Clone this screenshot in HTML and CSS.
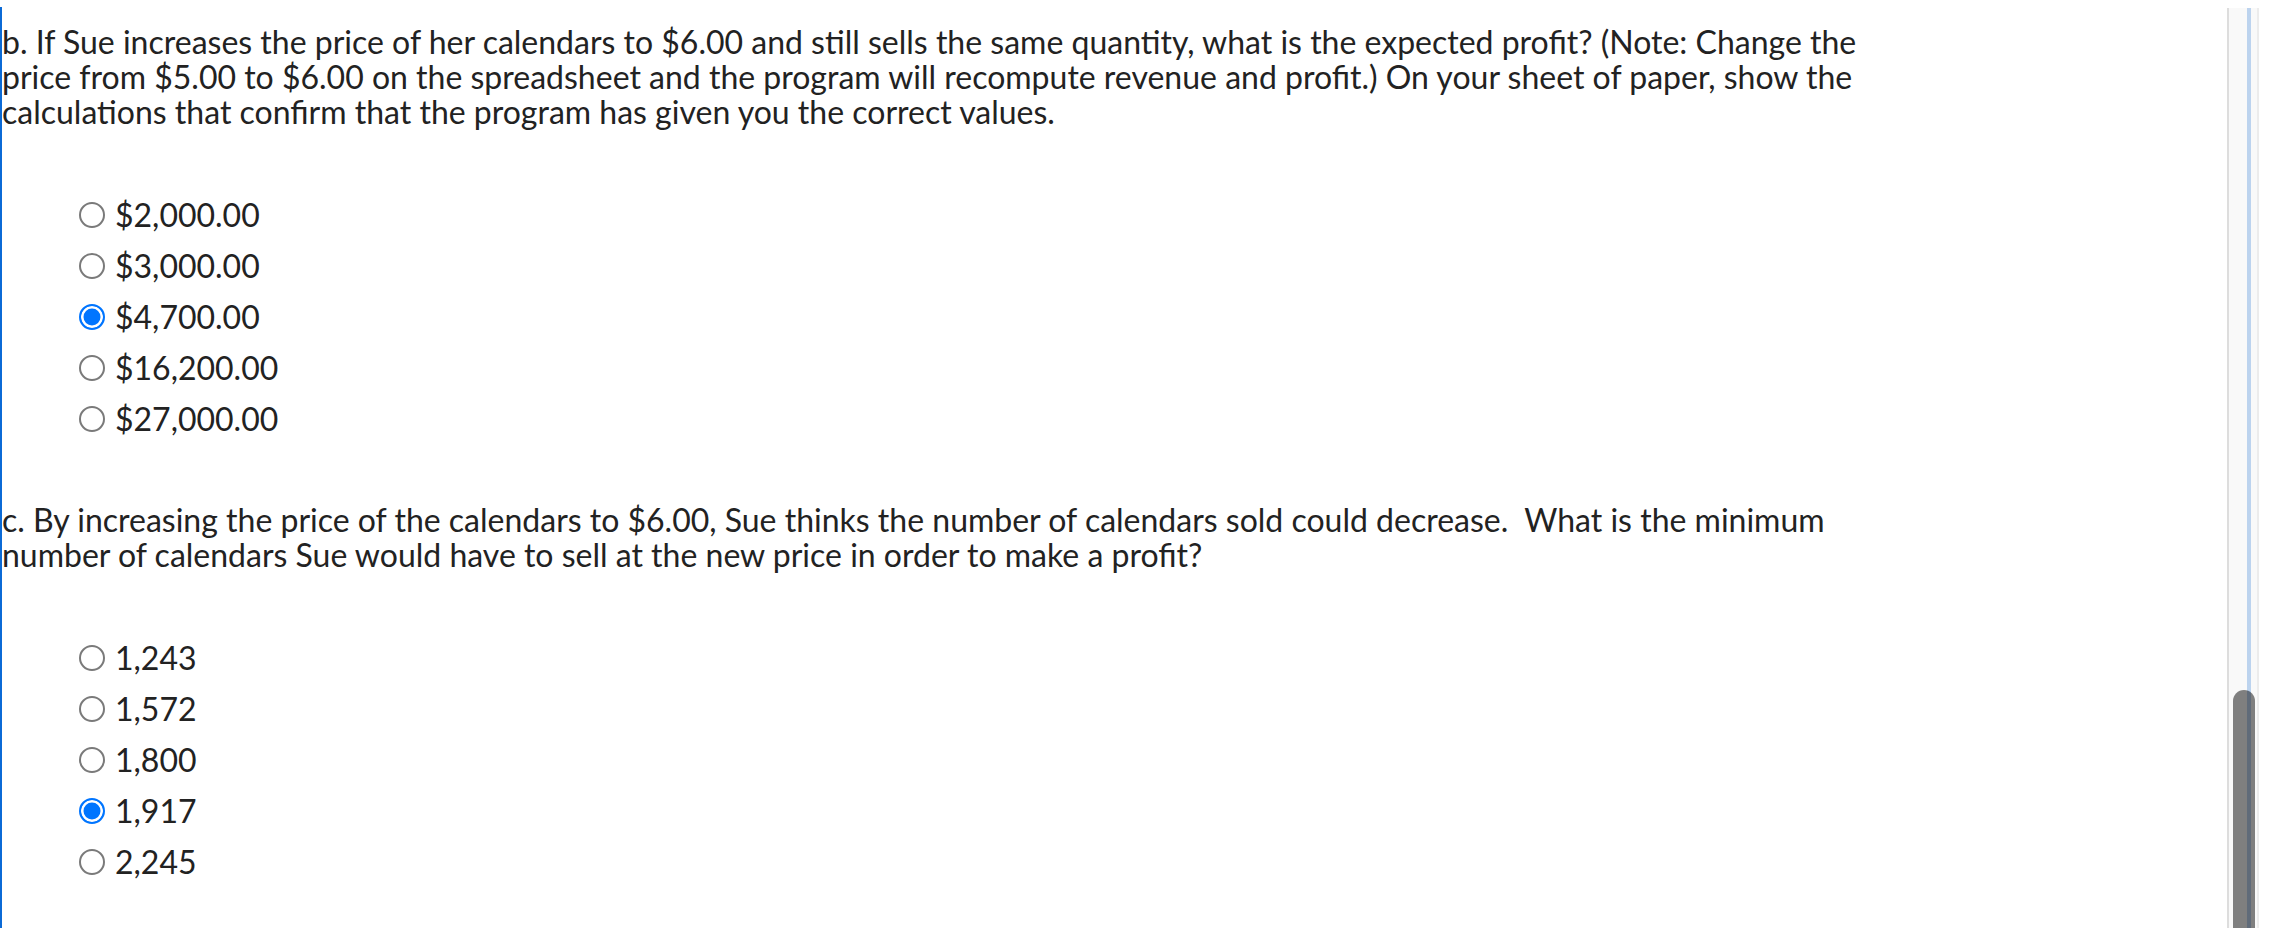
FILE: index.html
```html
<!DOCTYPE html>
<html lang="en">
<head>
<meta charset="utf-8">
<title>Question</title>
<link rel="stylesheet" href="styles.css">
</head>
<body>
<div class="page">
  <main class="main">
    <section class="question">
      <p class="prompt">b. If Sue increases the price of her calendars to $6.00 and still sells the same quantity, what is the expected profit? (Note: Change the price from $5.00 to $6.00 on the spreadsheet and the program will recompute revenue and profit.) On your sheet of paper, show the calculations that confirm that the program has given you the correct values.</p>
      <ul class="choices">
        <li><label class="choice"><input type="radio" name="qb" class="radio"><span>$2,000.00</span></label></li>
        <li><label class="choice"><input type="radio" name="qb" class="radio"><span>$3,000.00</span></label></li>
        <li><label class="choice"><input type="radio" name="qb" class="radio" checked><span>$4,700.00</span></label></li>
        <li><label class="choice"><input type="radio" name="qb" class="radio"><span>$16,200.00</span></label></li>
        <li><label class="choice"><input type="radio" name="qb" class="radio"><span>$27,000.00</span></label></li>
      </ul>
    </section>
    <section class="question">
      <p class="prompt">c. By increasing the price of the calendars to $6.00, Sue thinks the number of calendars sold could decrease.&nbsp; What is the minimum number of calendars Sue would have to sell at the new price in order to make a profit?</p>
      <ul class="choices">
        <li><label class="choice"><input type="radio" name="qc" class="radio"><span>1,243</span></label></li>
        <li><label class="choice"><input type="radio" name="qc" class="radio"><span>1,572</span></label></li>
        <li><label class="choice"><input type="radio" name="qc" class="radio"><span>1,800</span></label></li>
        <li><label class="choice"><input type="radio" name="qc" class="radio" checked><span>1,917</span></label></li>
        <li><label class="choice"><input type="radio" name="qc" class="radio"><span>2,245</span></label></li>
      </ul>
    </section>
  </main>
  <div class="scrolltrack">
    <div class="scrollline"></div>
    <div class="scrollthumb"></div>
  </div>
</div>
</body>
</html>
```
FILE: styles.css
```css
html, body {
  margin: 0;
  padding: 0;
  background: #ffffff;
  height: 100%;
  overflow: hidden;
}

.page {
  display: flex;
  height: 928px;
  font-family: Lato, "Open Sans", sans-serif;
  color: #222222;
}

.main {
  flex: 1;
  margin-top: 7px;
  padding-top: 17px;
  border-left: 2px solid #0b6ad6;
  min-width: 0;
}

.question {
  max-width: 1890px;
}

.prompt {
  margin: 0 0 60px;
  font-size: 32px;
  line-height: 35px;
}

.choices {
  list-style: none;
  margin: 0 0 58px;
  padding: 0 0 0 77px;
}

.choice {
  display: flex;
  align-items: center;
  gap: 10px;
  height: 51px;
  font-size: 32px;
  line-height: 35px;
  cursor: pointer;
}

.radio {
  appearance: none;
  -webkit-appearance: none;
  box-sizing: border-box;
  width: 26px;
  height: 26px;
  margin: 0;
  border: 2px solid #7a7a7a;
  border-radius: 50%;
  background: #ffffff;
  flex: none;
}

.radio:checked {
  border-color: #0075ff;
  background: #0075ff;
  box-shadow: inset 0 0 0 2.5px #ffffff;
}

.scrolltrack {
  position: relative;
  flex: none;
  width: 32px;
  margin: 8px 31px 0 0;
  box-sizing: border-box;
  border-left: 2px solid #dddddd;
  border-right: 2px solid #ececec;
  background: #f9f9f9;
}

.scrollline {
  position: absolute;
  left: 18px;
  top: 0;
  bottom: 0;
  width: 4px;
  background: #bcd3ee;
}

.scrollthumb {
  position: absolute;
  left: 4px;
  top: 682px;
  bottom: 0;
  width: 22px;
  border-radius: 11px 11px 0 0;
  background: rgba(0, 0, 0, 0.49);
}
```
